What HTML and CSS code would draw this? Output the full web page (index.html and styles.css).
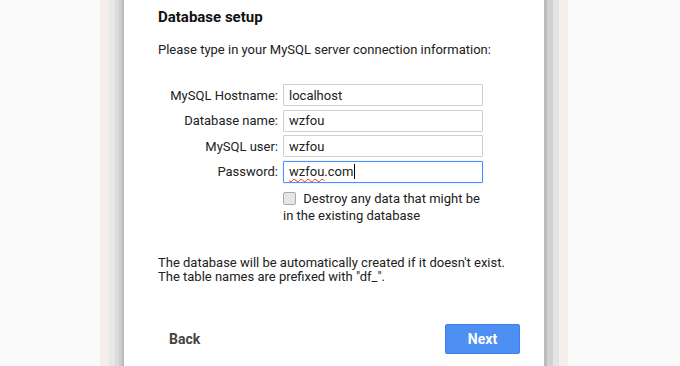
FILE: index.html
```html
<!DOCTYPE html>
<html>

<head>
  <title>Database setup</title>
  <link rel="stylesheet" href="styles.css">
</head>

<body>
  <main class="background">
    <div class="sheet">
      <div class="card">
        <h2 class="step-title">Database setup</h2>
        <p class="intro">Please type in your MySQL server connection information:</p>

        <div class="db-form">
          <label class="field-label" for="host">MySQL Hostname:</label>
          <input class="field" id="host" type="text" value="localhost">

          <label class="field-label" for="dbname">Database name:</label>
          <input class="field" id="dbname" type="text" value="wzfou">

          <label class="field-label" for="dbuser">MySQL user:</label>
          <input class="field" id="dbuser" type="text" value="wzfou">

          <label class="field-label">Password:</label>
          <div class="field field-focus"><span class="misspelled">wzfou</span>.com<span class="caret"></span></div>

          <div class="destroy-option">
            <input class="check" type="checkbox" id="destroy">
            <label for="destroy">Destroy any data that might be in the existing database</label>
          </div>
        </div>

        <p class="note">
          The database will be automatically created if it doesn't exist.<br>
          The table names are prefixed with "df_".
        </p>

        <div class="actions">
          <button class="back-btn">Back</button>
          <button class="next-btn">Next</button>
        </div>
      </div>
    </div>
  </main>
</body>

</html>
```

FILE: styles.css
```css
body {
  margin: 0;
  font-family: Roboto, Arial, sans-serif;
  color: #212121;
  background-color: #fafafa;
}

.background {
  min-height: 366px;
  padding-left: 100px;
  display: flex;
}

.sheet {
  width: 420px;
  padding: 0 24px;
  min-height: 366px;
  background:
    linear-gradient(to right, #f6eeed 0 9px, #e7e7e7 9px 15px, #dbdbdb 15px 19px, #cdcdcd 19px 22px, #bababa 22px 24px, transparent 24px),
    linear-gradient(to left, #f6eeed 0 9px, #e4e4e4 9px 15px, #d2d2d2 15px 21px, #bcbcbc 21px 24px, transparent 24px);
}

.card {
  background-color: white;
  min-height: 366px;
  box-sizing: border-box;
  padding: 8px 24px 0 34px;
}

.step-title {
  margin: 0;
  font-size: 15px;
  line-height: 18px;
  font-weight: bold;
  color: #111;
}

.intro {
  margin: 16px 0 0 0;
  font-size: 13px;
  line-height: 16px;
}

.db-form {
  margin-top: 26px;
  display: grid;
  grid-template-columns: 120px 200px;
  column-gap: 5px;
  row-gap: 3.6px;
  align-items: center;
  font-size: 13px;
}

.field-label {
  text-align: right;
}

.field {
  box-sizing: border-box;
  width: 200px;
  height: 22px;
  margin: 0;
  padding: 0 5px;
  border: 1px solid #cfcfcf;
  border-radius: 1px;
  font-family: Roboto, Arial, sans-serif;
  font-size: 13px;
  color: #222;
  outline: none;
}

.field-focus {
  display: flex;
  align-items: center;
  border-color: #4d90fe;
  box-shadow: 0 0 1px #4d90fe;
}

.misspelled {
  text-decoration: underline wavy #e03030;
  text-decoration-thickness: 1px;
  text-underline-offset: 2px;
}

.caret {
  width: 1px;
  height: 15px;
  background-color: #000;
  margin-left: 1px;
}

.destroy-option {
  grid-column: 2;
  margin-top: 4px;
  line-height: 17px;
}

.check {
  appearance: none;
  width: 13px;
  height: 13px;
  margin: 0 4px 0 0;
  vertical-align: -2px;
  border: 1px solid #a9a9a9;
  border-radius: 2px;
  background-color: #e6e6e6;
}

.note {
  margin: 32px 0 0 0;
  font-size: 13px;
  line-height: 14px;
}

.actions {
  margin-top: 40px;
  display: flex;
  justify-content: space-between;
  align-items: center;
}

.back-btn {
  border: none;
  background: none;
  padding: 0 11px;
  font-family: Roboto, Arial, sans-serif;
  font-size: 14px;
  font-weight: bold;
  color: #444;
}

.next-btn {
  width: 75px;
  height: 30px;
  border: 1px solid #3f7ee8;
  border-radius: 2px;
  background-color: #4d8ff3;
  color: white;
  font-family: Roboto, Arial, sans-serif;
  font-size: 14px;
  font-weight: bold;
}
```
